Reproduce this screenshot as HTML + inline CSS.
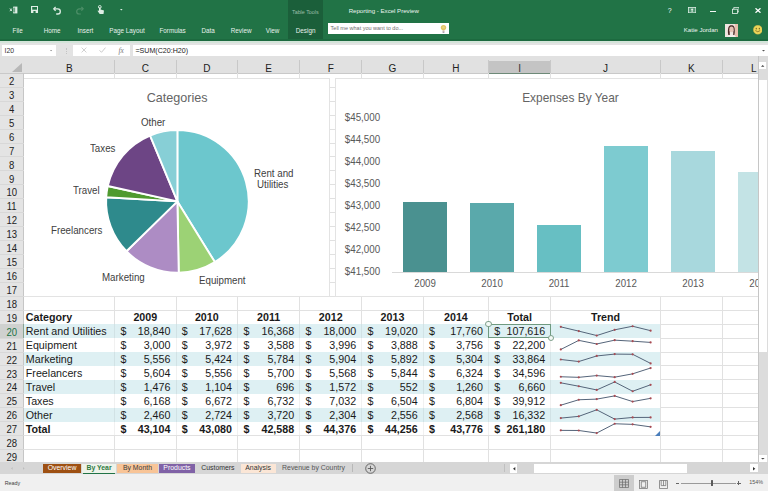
<!DOCTYPE html><html><head><meta charset="utf-8"><style>
*{margin:0;padding:0;box-sizing:border-box}
html,body{width:768px;height:491px;overflow:hidden;background:#fff;font-family:"Liberation Sans", sans-serif}
.a{position:absolute;white-space:nowrap}
.t{position:absolute;white-space:nowrap;line-height:1}
</style></head><body>
<div class="a" style="left:0;top:0;width:768px;height:40.7px;background:#217346"></div>
<div class="a" style="left:0;top:39.4px;width:768px;height:1.3px;background:#1c6a3f"></div>
<div class="a" style="left:288.3px;top:0;width:34.5px;height:39.4px;background:#1b5f3a"></div>
<div class="t" style="left:12.6px;top:28.3px;font-size:6.3px;color:#e8f1ec">File</div>
<div class="t" style="left:43.7px;top:28.3px;font-size:6.3px;color:#e8f1ec">Home</div>
<div class="t" style="left:77.5px;top:28.3px;font-size:6.3px;color:#e8f1ec">Insert</div>
<div class="t" style="left:109.3px;top:28.3px;font-size:6.3px;color:#e8f1ec">Page Layout</div>
<div class="t" style="left:159.5px;top:28.3px;font-size:6.3px;color:#e8f1ec">Formulas</div>
<div class="t" style="left:201.5px;top:28.3px;font-size:6.3px;color:#e8f1ec">Data</div>
<div class="t" style="left:230.8px;top:28.3px;font-size:6.3px;color:#e8f1ec">Review</div>
<div class="t" style="left:265.8px;top:28.3px;font-size:6.3px;color:#e8f1ec">View</div>
<div class="t" style="left:295.8px;top:28.3px;font-size:6.3px;color:#e8f1ec">Design</div>
<div class="t" style="left:292px;top:10.2px;font-size:5.35px;color:#9bbfab">Table Tools</div>
<div class="t" style="left:348.7px;top:8.2px;font-size:6.1px;color:#eef5f1">Reporting - Excel Preview</div>
<div class="a" style="left:328.2px;top:22.8px;width:121.3px;height:11.4px;background:#fff"></div>
<div class="t" style="left:330.6px;top:25.8px;font-size:5.5px;color:#6d6d6d">Tell me what you want to do...</div>
<svg class="a" style="left:439.5px;top:23.5px" width="7" height="10" viewBox="0 0 7 10"><circle cx="3.5" cy="3.6" r="2.7" fill="#e2c565"/><circle cx="3.5" cy="3.4" r="1.2" fill="#ecd488"/><rect x="2.5" y="6.3" width="2" height="1.2" fill="#d8b8a0"/><rect x="2.6" y="7.5" width="1.8" height="1.3" fill="#9a8aa0"/></svg>
<div class="t" style="left:683.8px;top:26.8px;font-size:6.1px;color:#eef5f1">Katie Jordan</div>
<svg class="a" style="left:725.3px;top:23.8px" width="13" height="13.2" viewBox="0 0 13 13.2"><rect width="13" height="13.2" fill="#efe6e0"/><rect x="9.8" y="0" width="3.2" height="13.2" fill="#e8c0ae"/><path d="M3.3 11 C2.6 8 2.8 4 3.8 2.5 C5 0.9 8.2 0.9 9.2 2.7 C10 4.4 10 8 9.4 11 L8.2 11 L8.4 6 L4.6 6 L4.8 11Z" fill="#4a2a26"/><ellipse cx="6.5" cy="5.4" rx="2.2" ry="2.8" fill="#e4c2b4"/><path d="M1.8 13.2 C3 10.2 10 10.2 11.2 13.2Z" fill="#f3efed"/></svg>
<svg class="a" style="left:752.9px;top:25.4px" width="9.6" height="9.6" viewBox="0 0 10 10"><circle cx="5" cy="5" r="4.7" fill="#ecd55a"/><circle cx="5" cy="5" r="4.7" fill="none" stroke="#c9b140" stroke-width="0.4"/><ellipse cx="3.4" cy="3.7" rx="0.6" ry="0.9" fill="#6b5a1a"/><ellipse cx="6.6" cy="3.7" rx="0.6" ry="0.9" fill="#6b5a1a"/><path d="M2.5 5.8 Q5 8.3 7.5 5.8" stroke="#6b5a1a" stroke-width="0.7" fill="none"/></svg>
<div class="t" style="left:667.8px;top:6.6px;font-size:7px;color:#fff">?</div>
<svg class="a" style="left:687.8px;top:6.7px" width="8.2" height="6.2" viewBox="0 0 8.2 6.2"><rect x="0.4" y="0.4" width="7.4" height="5.4" fill="#4f9570" stroke="#dfeee5" stroke-width="0.8"/><path d="M4.1 1.2 L2.7 2.8 H3.6 V4.9 H4.6 V2.8 H5.5Z" fill="#eef6f1"/></svg>
<div class="a" style="left:710px;top:10.9px;width:6px;height:0.8px;background:#f4f8f5"></div>
<svg class="a" style="left:732px;top:6.8px" width="7.4" height="7" viewBox="0 0 7.4 7"><rect x="0.4" y="2.2" width="5" height="4.4" fill="none" stroke="#eef6f1" stroke-width="0.8"/><path d="M1.8 2.2 V0.4 H7 V4.8 H5.4" fill="none" stroke="#eef6f1" stroke-width="0.8"/></svg>
<svg class="a" style="left:755px;top:8px" width="6" height="5" viewBox="0 0 6 5"><path d="M0.5 0.3 L5.5 4.7 M5.5 0.3 L0.5 4.7" stroke="#fff" stroke-width="1.3"/></svg>
<svg class="a" style="left:9px;top:6px" width="9" height="8" viewBox="0 0 9 8"><path d="M0.9 2.4 L3 5.2 M3 2.4 L0.9 5.2" stroke="#dfeee5" stroke-width="0.9"/><rect x="4.2" y="0.6" width="4.2" height="6.8" fill="#dfeee5"/><rect x="5.4" y="1.6" width="0.7" height="4.8" fill="#217346"/><rect x="3.6" y="2" width="0.8" height="4" fill="#217346"/></svg>
<svg class="a" style="left:31px;top:6.1px" width="7.2" height="7.2" viewBox="0 0 7.2 7.2"><rect x="0" y="0" width="7.2" height="7.2" fill="#dfeee5"/><rect x="1.2" y="1" width="4.8" height="2.7" fill="#217346"/><rect x="2.4" y="5" width="2.2" height="2.2" fill="#217346"/></svg>
<svg class="a" style="left:52.5px;top:6px" width="9" height="9" viewBox="0 0 9 9"><path d="M2.6 0.9 L0.8 2.8 L2.6 4.7" stroke="#dfeee5" stroke-width="1.3" fill="none"/><path d="M1.1 2.8 H4.7 A2.6 2.6 0 0 1 4.7 8 H3.2" stroke="#dfeee5" stroke-width="1.3" fill="none"/></svg>
<svg class="a" style="left:74.8px;top:6px" width="9" height="9" viewBox="0 0 9 9"><path d="M6.4 0.9 L8.2 2.8 L6.4 4.7" stroke="#4d8f68" stroke-width="1.2" fill="none"/><path d="M7.9 2.8 H4.3 A2.6 2.6 0 0 0 4.3 8 H5.8" stroke="#4d8f68" stroke-width="1.2" fill="none"/></svg>
<svg class="a" style="left:97px;top:5.2px" width="8" height="9.5" viewBox="0 0 8 9.5"><circle cx="2.8" cy="1.9" r="1.4" fill="none" stroke="#dfeee5" stroke-width="0.9"/><path d="M2 2.4 V6 L1 5.3 L0.6 6 L2.7 9 H6.5 L7 5.6 L3.6 4.6 V2.4Z" fill="#dfeee5"/></svg>
<svg class="a" style="left:118.60px;top:7.50px" width="4.60" height="3.50"><path d="M1.00 1.00 L3.60 1.00 L2.30 2.50Z" fill="#dfeee5"/></svg>
<div class="a" style="left:0;top:40.7px;width:768px;height:15.4px;background:#e3e3e3"></div>
<div class="a" style="left:0;top:40.7px;width:768px;height:2px;background:#d3e4d9"></div>
<div class="a" style="left:2px;top:44.8px;width:54px;height:11.1px;background:#fff"></div>
<div class="t" style="left:4.6px;top:48.1px;font-size:6.9px;color:#333">I20</div>
<svg class="a" style="left:49.30px;top:49.20px" width="4.20" height="3.20"><path d="M1.00 1.00 L3.20 1.00 L2.10 2.20Z" fill="#8a8a8a"/></svg>
<div class="a" style="left:66px;top:47.5px;width:0.8px;height:6px;border-left:0.8px dotted #c4c4c4"></div>
<div class="a" style="left:73px;top:44.8px;width:57.3px;height:11.1px;background:#fff"></div>
<svg class="a" style="left:80.5px;top:47.2px" width="6" height="6" viewBox="0 0 6 6"><path d="M0.6 0.6 L5.4 5.4 M5.4 0.6 L0.6 5.4" stroke="#c4c4c4" stroke-width="0.8"/></svg>
<svg class="a" style="left:99px;top:47.2px" width="7" height="6" viewBox="0 0 7 6"><path d="M0.5 3.3 L2.5 5.3 L6.5 0.6" stroke="#c4c4c4" stroke-width="0.9" fill="none"/></svg>
<div class="t" style="left:118.5px;top:47.1px;font-size:7.4px;color:#777;font-family:'Liberation Serif';font-style:italic">fx</div>
<div class="a" style="left:132.8px;top:44.8px;width:635.2px;height:11.1px;background:#fff"></div>
<div class="t" style="left:135.4px;top:47.9px;font-size:7.1px;color:#222">=SUM(C20:H20)</div>
<svg class="a" style="left:760.50px;top:49.30px" width="5.00" height="3.60"><path d="M1.00 1.00 L4.00 1.00 L2.50 2.60Z" fill="#555"/></svg>
<div class="a" style="left:0;top:56.0px;width:768px;height:17.200000000000003px;background:#e1e1e1"></div>
<div class="a" style="left:0;top:73.2px;width:768px;height:0.9px;background:#c9c9c9"></div>
<svg class="a" style="left:12px;top:63px" width="10" height="9" viewBox="0 0 10 9"><path d="M10 0 V9 H0Z" fill="#b8b8b8"/></svg>
<div class="a" style="left:114.19999999999999px;top:60.4px;width:0.8px;height:12.800000000000004px;background:#c8c8c8"></div>
<div class="t" style="left:24px;width:90.6px;text-align:center;top:63.9px;font-size:10px;color:#222">B</div>
<div class="a" style="left:175.6px;top:60.4px;width:0.8px;height:12.800000000000004px;background:#c8c8c8"></div>
<div class="t" style="left:114.6px;width:61.400000000000006px;text-align:center;top:63.9px;font-size:10px;color:#222">C</div>
<div class="a" style="left:237.2px;top:60.4px;width:0.8px;height:12.800000000000004px;background:#c8c8c8"></div>
<div class="t" style="left:176px;width:61.599999999999994px;text-align:center;top:63.9px;font-size:10px;color:#222">D</div>
<div class="a" style="left:299.40000000000003px;top:60.4px;width:0.8px;height:12.800000000000004px;background:#c8c8c8"></div>
<div class="t" style="left:237.6px;width:62.20000000000002px;text-align:center;top:63.9px;font-size:10px;color:#222">E</div>
<div class="a" style="left:361.3px;top:60.4px;width:0.8px;height:12.800000000000004px;background:#c8c8c8"></div>
<div class="t" style="left:299.8px;width:61.89999999999998px;text-align:center;top:63.9px;font-size:10px;color:#222">F</div>
<div class="a" style="left:422.90000000000003px;top:60.4px;width:0.8px;height:12.800000000000004px;background:#c8c8c8"></div>
<div class="t" style="left:361.7px;width:61.60000000000002px;text-align:center;top:63.9px;font-size:10px;color:#222">G</div>
<div class="a" style="left:488.1px;top:60.4px;width:0.8px;height:12.800000000000004px;background:#c8c8c8"></div>
<div class="t" style="left:423.3px;width:65.19999999999999px;text-align:center;top:63.9px;font-size:10px;color:#222">H</div>
<div class="a" style="left:488.5px;top:60.8px;width:62.299999999999955px;height:12.400000000000006px;background:#c4c4c4"></div>
<div class="a" style="left:488.5px;top:72.7px;width:62.299999999999955px;height:1.4px;background:#6e8a78"></div>
<div class="a" style="left:550.4px;top:60.4px;width:0.8px;height:12.800000000000004px;background:#c8c8c8"></div>
<div class="t" style="left:488.5px;width:62.299999999999955px;text-align:center;top:63.9px;font-size:10px;color:#333">I</div>
<div class="a" style="left:659.8000000000001px;top:60.4px;width:0.8px;height:12.800000000000004px;background:#c8c8c8"></div>
<div class="t" style="left:550.8px;width:109.40000000000009px;text-align:center;top:63.9px;font-size:10px;color:#222">J</div>
<div class="a" style="left:722.2px;top:60.4px;width:0.8px;height:12.800000000000004px;background:#c8c8c8"></div>
<div class="t" style="left:660.2px;width:62.39999999999998px;text-align:center;top:63.9px;font-size:10px;color:#222">K</div>
<div class="a" style="left:784.6px;top:60.4px;width:0.8px;height:12.800000000000004px;background:#c8c8c8"></div>
<div class="t" style="left:722.6px;width:62.39999999999998px;text-align:center;top:63.9px;font-size:10px;color:#222">L</div>
<div class="a" style="left:0;top:74.10000000000001px;width:23.6px;height:388.90000000000003px;background:#e4e4e4"></div>
<div class="a" style="left:23.4px;top:73.2px;width:0.8px;height:388.90000000000003px;background:#c6c6c6"></div>
<div class="a" style="left:24.2px;top:324.04px;width:636.0px;height:13.93px;background:#def0f3"></div>
<div class="a" style="left:24.2px;top:351.90000000000003px;width:636.0px;height:13.93px;background:#def0f3"></div>
<div class="a" style="left:24.2px;top:379.76px;width:636.0px;height:13.93px;background:#def0f3"></div>
<div class="a" style="left:24.2px;top:407.62px;width:636.0px;height:13.93px;background:#def0f3"></div>
<div class="a" style="left:24px;top:86.82999999999998px;width:734px;height:0.8px;background:#e1e1e1"></div>
<div class="a" style="left:0px;top:86.82999999999998px;width:23.5px;height:0.8px;background:#d8d8d8"></div>
<div class="a" style="left:24px;top:100.75999999999999px;width:734px;height:0.8px;background:#e1e1e1"></div>
<div class="a" style="left:0px;top:100.75999999999999px;width:23.5px;height:0.8px;background:#d8d8d8"></div>
<div class="a" style="left:24px;top:114.69px;width:734px;height:0.8px;background:#e1e1e1"></div>
<div class="a" style="left:0px;top:114.69px;width:23.5px;height:0.8px;background:#d8d8d8"></div>
<div class="a" style="left:24px;top:128.61999999999998px;width:734px;height:0.8px;background:#e1e1e1"></div>
<div class="a" style="left:0px;top:128.61999999999998px;width:23.5px;height:0.8px;background:#d8d8d8"></div>
<div class="a" style="left:24px;top:142.54999999999998px;width:734px;height:0.8px;background:#e1e1e1"></div>
<div class="a" style="left:0px;top:142.54999999999998px;width:23.5px;height:0.8px;background:#d8d8d8"></div>
<div class="a" style="left:24px;top:156.48px;width:734px;height:0.8px;background:#e1e1e1"></div>
<div class="a" style="left:0px;top:156.48px;width:23.5px;height:0.8px;background:#d8d8d8"></div>
<div class="a" style="left:24px;top:170.41px;width:734px;height:0.8px;background:#e1e1e1"></div>
<div class="a" style="left:0px;top:170.41px;width:23.5px;height:0.8px;background:#d8d8d8"></div>
<div class="a" style="left:24px;top:184.34px;width:734px;height:0.8px;background:#e1e1e1"></div>
<div class="a" style="left:0px;top:184.34px;width:23.5px;height:0.8px;background:#d8d8d8"></div>
<div class="a" style="left:24px;top:198.27px;width:734px;height:0.8px;background:#e1e1e1"></div>
<div class="a" style="left:0px;top:198.27px;width:23.5px;height:0.8px;background:#d8d8d8"></div>
<div class="a" style="left:24px;top:212.20000000000002px;width:734px;height:0.8px;background:#e1e1e1"></div>
<div class="a" style="left:0px;top:212.20000000000002px;width:23.5px;height:0.8px;background:#d8d8d8"></div>
<div class="a" style="left:24px;top:226.12999999999997px;width:734px;height:0.8px;background:#e1e1e1"></div>
<div class="a" style="left:0px;top:226.12999999999997px;width:23.5px;height:0.8px;background:#d8d8d8"></div>
<div class="a" style="left:24px;top:240.05999999999997px;width:734px;height:0.8px;background:#e1e1e1"></div>
<div class="a" style="left:0px;top:240.05999999999997px;width:23.5px;height:0.8px;background:#d8d8d8"></div>
<div class="a" style="left:24px;top:253.98999999999998px;width:734px;height:0.8px;background:#e1e1e1"></div>
<div class="a" style="left:0px;top:253.98999999999998px;width:23.5px;height:0.8px;background:#d8d8d8"></div>
<div class="a" style="left:24px;top:267.92px;width:734px;height:0.8px;background:#e1e1e1"></div>
<div class="a" style="left:0px;top:267.92px;width:23.5px;height:0.8px;background:#d8d8d8"></div>
<div class="a" style="left:24px;top:281.85px;width:734px;height:0.8px;background:#e1e1e1"></div>
<div class="a" style="left:0px;top:281.85px;width:23.5px;height:0.8px;background:#d8d8d8"></div>
<div class="a" style="left:24px;top:295.78000000000003px;width:734px;height:0.8px;background:#e1e1e1"></div>
<div class="a" style="left:0px;top:295.78000000000003px;width:23.5px;height:0.8px;background:#d8d8d8"></div>
<div class="a" style="left:24px;top:309.71000000000004px;width:734px;height:0.8px;background:#e1e1e1"></div>
<div class="a" style="left:0px;top:309.71000000000004px;width:23.5px;height:0.8px;background:#d8d8d8"></div>
<div class="a" style="left:660.2px;top:323.64000000000004px;width:98px;height:0.8px;background:#e1e1e1"></div>
<div class="a" style="left:0px;top:323.64000000000004px;width:23.5px;height:0.8px;background:#d8d8d8"></div>
<div class="a" style="left:660.2px;top:337.57000000000005px;width:98px;height:0.8px;background:#e1e1e1"></div>
<div class="a" style="left:0px;top:337.57000000000005px;width:23.5px;height:0.8px;background:#d8d8d8"></div>
<div class="a" style="left:660.2px;top:351.50000000000006px;width:98px;height:0.8px;background:#e1e1e1"></div>
<div class="a" style="left:0px;top:351.50000000000006px;width:23.5px;height:0.8px;background:#d8d8d8"></div>
<div class="a" style="left:660.2px;top:365.43px;width:98px;height:0.8px;background:#e1e1e1"></div>
<div class="a" style="left:0px;top:365.43px;width:23.5px;height:0.8px;background:#d8d8d8"></div>
<div class="a" style="left:660.2px;top:379.36px;width:98px;height:0.8px;background:#e1e1e1"></div>
<div class="a" style="left:0px;top:379.36px;width:23.5px;height:0.8px;background:#d8d8d8"></div>
<div class="a" style="left:660.2px;top:393.29px;width:98px;height:0.8px;background:#e1e1e1"></div>
<div class="a" style="left:0px;top:393.29px;width:23.5px;height:0.8px;background:#d8d8d8"></div>
<div class="a" style="left:660.2px;top:407.22px;width:98px;height:0.8px;background:#e1e1e1"></div>
<div class="a" style="left:0px;top:407.22px;width:23.5px;height:0.8px;background:#d8d8d8"></div>
<div class="a" style="left:660.2px;top:421.15000000000003px;width:98px;height:0.8px;background:#e1e1e1"></div>
<div class="a" style="left:0px;top:421.15000000000003px;width:23.5px;height:0.8px;background:#d8d8d8"></div>
<div class="a" style="left:24px;top:435.08000000000004px;width:734px;height:0.8px;background:#e1e1e1"></div>
<div class="a" style="left:0px;top:435.08000000000004px;width:23.5px;height:0.8px;background:#d8d8d8"></div>
<div class="a" style="left:24px;top:449.01000000000005px;width:734px;height:0.8px;background:#e1e1e1"></div>
<div class="a" style="left:0px;top:449.01000000000005px;width:23.5px;height:0.8px;background:#d8d8d8"></div>
<div class="a" style="left:114.19999999999999px;top:73.2px;width:0.8px;height:250.84000000000003px;background:#e1e1e1"></div>
<div class="a" style="left:114.19999999999999px;top:435.48px;width:0.8px;height:26.620000000000005px;background:#e1e1e1"></div>
<div class="a" style="left:114.19999999999999px;top:324.04px;width:0.8px;height:111.44px;background:rgba(0,0,0,0.055)"></div>
<div class="a" style="left:175.6px;top:73.2px;width:0.8px;height:250.84000000000003px;background:#e1e1e1"></div>
<div class="a" style="left:175.6px;top:435.48px;width:0.8px;height:26.620000000000005px;background:#e1e1e1"></div>
<div class="a" style="left:175.6px;top:324.04px;width:0.8px;height:111.44px;background:rgba(0,0,0,0.055)"></div>
<div class="a" style="left:237.2px;top:73.2px;width:0.8px;height:250.84000000000003px;background:#e1e1e1"></div>
<div class="a" style="left:237.2px;top:435.48px;width:0.8px;height:26.620000000000005px;background:#e1e1e1"></div>
<div class="a" style="left:237.2px;top:324.04px;width:0.8px;height:111.44px;background:rgba(0,0,0,0.055)"></div>
<div class="a" style="left:299.40000000000003px;top:73.2px;width:0.8px;height:250.84000000000003px;background:#e1e1e1"></div>
<div class="a" style="left:299.40000000000003px;top:435.48px;width:0.8px;height:26.620000000000005px;background:#e1e1e1"></div>
<div class="a" style="left:299.40000000000003px;top:324.04px;width:0.8px;height:111.44px;background:rgba(0,0,0,0.055)"></div>
<div class="a" style="left:361.3px;top:73.2px;width:0.8px;height:250.84000000000003px;background:#e1e1e1"></div>
<div class="a" style="left:361.3px;top:435.48px;width:0.8px;height:26.620000000000005px;background:#e1e1e1"></div>
<div class="a" style="left:361.3px;top:324.04px;width:0.8px;height:111.44px;background:rgba(0,0,0,0.055)"></div>
<div class="a" style="left:422.90000000000003px;top:73.2px;width:0.8px;height:250.84000000000003px;background:#e1e1e1"></div>
<div class="a" style="left:422.90000000000003px;top:435.48px;width:0.8px;height:26.620000000000005px;background:#e1e1e1"></div>
<div class="a" style="left:422.90000000000003px;top:324.04px;width:0.8px;height:111.44px;background:rgba(0,0,0,0.055)"></div>
<div class="a" style="left:488.1px;top:73.2px;width:0.8px;height:250.84000000000003px;background:#e1e1e1"></div>
<div class="a" style="left:488.1px;top:435.48px;width:0.8px;height:26.620000000000005px;background:#e1e1e1"></div>
<div class="a" style="left:488.1px;top:324.04px;width:0.8px;height:111.44px;background:rgba(0,0,0,0.055)"></div>
<div class="a" style="left:550.4px;top:73.2px;width:0.8px;height:250.84000000000003px;background:#e1e1e1"></div>
<div class="a" style="left:550.4px;top:435.48px;width:0.8px;height:26.620000000000005px;background:#e1e1e1"></div>
<div class="a" style="left:550.4px;top:324.04px;width:0.8px;height:111.44px;background:rgba(0,0,0,0.055)"></div>
<div class="a" style="left:659.8000000000001px;top:73.2px;width:0.8px;height:388.90000000000003px;background:#e1e1e1"></div>
<div class="a" style="left:722.2px;top:73.2px;width:0.8px;height:388.90000000000003px;background:#e1e1e1"></div>
<div class="t" style="left:0;width:23.4px;text-align:center;top:76.0px;font-size:10.6px;transform:scaleX(0.9);color:#222">2</div>
<div class="t" style="left:0;width:23.4px;text-align:center;top:89.92999999999999px;font-size:10.6px;transform:scaleX(0.9);color:#222">3</div>
<div class="t" style="left:0;width:23.4px;text-align:center;top:103.86px;font-size:10.6px;transform:scaleX(0.9);color:#222">4</div>
<div class="t" style="left:0;width:23.4px;text-align:center;top:117.79px;font-size:10.6px;transform:scaleX(0.9);color:#222">5</div>
<div class="t" style="left:0;width:23.4px;text-align:center;top:131.71999999999997px;font-size:10.6px;transform:scaleX(0.9);color:#222">6</div>
<div class="t" style="left:0;width:23.4px;text-align:center;top:145.64999999999998px;font-size:10.6px;transform:scaleX(0.9);color:#222">7</div>
<div class="t" style="left:0;width:23.4px;text-align:center;top:159.57999999999998px;font-size:10.6px;transform:scaleX(0.9);color:#222">8</div>
<div class="t" style="left:0;width:23.4px;text-align:center;top:173.51px;font-size:10.6px;transform:scaleX(0.9);color:#222">9</div>
<div class="t" style="left:0;width:23.4px;text-align:center;top:187.44px;font-size:10.6px;transform:scaleX(0.9);color:#222">10</div>
<div class="t" style="left:0;width:23.4px;text-align:center;top:201.37px;font-size:10.6px;transform:scaleX(0.9);color:#222">11</div>
<div class="t" style="left:0;width:23.4px;text-align:center;top:215.3px;font-size:10.6px;transform:scaleX(0.9);color:#222">12</div>
<div class="t" style="left:0;width:23.4px;text-align:center;top:229.22999999999996px;font-size:10.6px;transform:scaleX(0.9);color:#222">13</div>
<div class="t" style="left:0;width:23.4px;text-align:center;top:243.15999999999997px;font-size:10.6px;transform:scaleX(0.9);color:#222">14</div>
<div class="t" style="left:0;width:23.4px;text-align:center;top:257.09px;font-size:10.6px;transform:scaleX(0.9);color:#222">15</div>
<div class="t" style="left:0;width:23.4px;text-align:center;top:271.02px;font-size:10.6px;transform:scaleX(0.9);color:#222">16</div>
<div class="t" style="left:0;width:23.4px;text-align:center;top:284.95px;font-size:10.6px;transform:scaleX(0.9);color:#222">17</div>
<div class="t" style="left:0;width:23.4px;text-align:center;top:298.88px;font-size:10.6px;transform:scaleX(0.9);color:#222">18</div>
<div class="t" style="left:0;width:23.4px;text-align:center;top:312.81px;font-size:10.6px;transform:scaleX(0.9);color:#222">19</div>
<div class="a" style="left:0;top:324.04px;width:23.4px;height:13.93px;background:#cfd1cf"></div>
<div class="a" style="left:22.8px;top:324.04px;width:1px;height:13.93px;background:#88a393"></div>
<div class="t" style="left:0;width:23.4px;text-align:center;top:326.74px;font-size:10.6px;transform:scaleX(0.9);color:#217346">20</div>
<div class="t" style="left:0;width:23.4px;text-align:center;top:340.67px;font-size:10.6px;transform:scaleX(0.9);color:#222">21</div>
<div class="t" style="left:0;width:23.4px;text-align:center;top:354.6px;font-size:10.6px;transform:scaleX(0.9);color:#222">22</div>
<div class="t" style="left:0;width:23.4px;text-align:center;top:368.53px;font-size:10.6px;transform:scaleX(0.9);color:#222">23</div>
<div class="t" style="left:0;width:23.4px;text-align:center;top:382.46px;font-size:10.6px;transform:scaleX(0.9);color:#222">24</div>
<div class="t" style="left:0;width:23.4px;text-align:center;top:396.39px;font-size:10.6px;transform:scaleX(0.9);color:#222">25</div>
<div class="t" style="left:0;width:23.4px;text-align:center;top:410.32px;font-size:10.6px;transform:scaleX(0.9);color:#222">26</div>
<div class="t" style="left:0;width:23.4px;text-align:center;top:424.25px;font-size:10.6px;transform:scaleX(0.9);color:#222">27</div>
<div class="t" style="left:0;width:23.4px;text-align:center;top:438.18px;font-size:10.6px;transform:scaleX(0.9);color:#222">28</div>
<div class="t" style="left:0;width:23.4px;text-align:center;top:452.11px;font-size:10.6px;transform:scaleX(0.9);color:#222">29</div>
<div class="a" style="left:24.2px;top:78.0px;width:305.40000000000003px;height:218.89999999999998px;background:#fff;border:0.8px solid #e3e3e3;border-left:none"></div>
<div class="a" style="left:335.4px;top:78.0px;width:422.6px;height:218.89999999999998px;background:#fff;border:0.8px solid #e3e3e3;border-right:none"></div>
<div class="t" style="left:146.7px;top:91.8px;font-size:12.6px;color:#646464">Categories</div>
<div class="t" style="left:522.2px;top:92.7px;font-size:11.9px;color:#646464">Expenses By Year</div>
<svg class="a" style="left:0;top:0" width="768" height="491" viewBox="0 0 768 491">
<path d="M177.4 201.4 L177.40 130.10 A71.3 71.3 0 0 1 214.83 262.08Z" fill="#6cc7cd" stroke="#fff" stroke-width="1.9" stroke-linejoin="round"/>
<path d="M177.4 201.4 L214.83 262.08 A71.3 71.3 0 0 1 178.73 272.69Z" fill="#9cd275" stroke="#fff" stroke-width="1.9" stroke-linejoin="round"/>
<path d="M177.4 201.4 L178.73 272.69 A71.3 71.3 0 0 1 126.45 251.28Z" fill="#ad8cc4" stroke="#fff" stroke-width="1.9" stroke-linejoin="round"/>
<path d="M177.4 201.4 L126.45 251.28 A71.3 71.3 0 0 1 106.22 197.30Z" fill="#2e8a8c" stroke="#fff" stroke-width="1.9" stroke-linejoin="round"/>
<path d="M177.4 201.4 L106.22 197.30 A71.3 71.3 0 0 1 107.78 186.00Z" fill="#4f9a2f" stroke="#fff" stroke-width="1.9" stroke-linejoin="round"/>
<path d="M177.4 201.4 L107.78 186.00 A71.3 71.3 0 0 1 150.10 135.53Z" fill="#6d4585" stroke="#fff" stroke-width="1.9" stroke-linejoin="round"/>
<path d="M177.4 201.4 L150.10 135.53 A71.3 71.3 0 0 1 177.40 130.10Z" fill="#87cfd6" stroke="#fff" stroke-width="1.9" stroke-linejoin="round"/>
</svg>
<div class="t" style="left:141px;top:116.8px;font-size:11.4px;transform:scaleX(0.855);transform-origin:0 0;color:#404040">Other</div>
<div class="t" style="left:89.8px;top:142.8px;font-size:11.4px;transform:scaleX(0.855);transform-origin:0 0;color:#404040">Taxes</div>
<div class="t" style="left:72.5px;top:185.4px;font-size:11.4px;transform:scaleX(0.855);transform-origin:0 0;color:#404040">Travel</div>
<div class="t" style="left:51.2px;top:225.3px;font-size:11.4px;transform:scaleX(0.855);transform-origin:0 0;color:#404040">Freelancers</div>
<div class="t" style="left:101.8px;top:272.3px;font-size:11.4px;transform:scaleX(0.855);transform-origin:0 0;color:#404040">Marketing</div>
<div class="t" style="left:199.4px;top:275.0px;font-size:11.4px;transform:scaleX(0.855);transform-origin:0 0;color:#404040">Equipment</div>
<div class="t" style="left:253.5px;top:167.60000000000002px;font-size:11.4px;transform:scaleX(0.855);transform-origin:0 0;color:#404040">Rent and</div>
<div class="t" style="left:257.3px;top:178.5px;font-size:11.4px;transform:scaleX(0.855);transform-origin:0 0;color:#404040">Utilities</div>
<div class="a" style="left:392px;top:272.4px;width:366px;height:0.8px;background:#d9d9d9"></div>
<div class="t" style="left:330px;width:50.2px;text-align:right;top:111.7px;font-size:11.3px;transform:scaleX(0.867);transform-origin:100% 0;color:#595959">$45,000</div>
<div class="t" style="left:330px;width:50.2px;text-align:right;top:133.70000000000002px;font-size:11.3px;transform:scaleX(0.867);transform-origin:100% 0;color:#595959">$44,500</div>
<div class="t" style="left:330px;width:50.2px;text-align:right;top:155.70000000000002px;font-size:11.3px;transform:scaleX(0.867);transform-origin:100% 0;color:#595959">$44,000</div>
<div class="t" style="left:330px;width:50.2px;text-align:right;top:177.70000000000002px;font-size:11.3px;transform:scaleX(0.867);transform-origin:100% 0;color:#595959">$43,500</div>
<div class="t" style="left:330px;width:50.2px;text-align:right;top:199.70000000000002px;font-size:11.3px;transform:scaleX(0.867);transform-origin:100% 0;color:#595959">$43,000</div>
<div class="t" style="left:330px;width:50.2px;text-align:right;top:221.70000000000002px;font-size:11.3px;transform:scaleX(0.867);transform-origin:100% 0;color:#595959">$42,500</div>
<div class="t" style="left:330px;width:50.2px;text-align:right;top:243.70000000000002px;font-size:11.3px;transform:scaleX(0.867);transform-origin:100% 0;color:#595959">$42,000</div>
<div class="t" style="left:330px;width:50.2px;text-align:right;top:265.7px;font-size:11.3px;transform:scaleX(0.867);transform-origin:100% 0;color:#595959">$41,500</div>
<div class="a" style="left:403.30px;top:201.82px;width:44.20px;height:70.58px;background:#4a9190"></div>
<div class="t" style="left:393.30px;width:64.2px;text-align:center;top:278.3px;font-size:11.2px;transform:scaleX(0.866);color:#595959">2009</div>
<div class="a" style="left:470.15px;top:202.88px;width:44.20px;height:69.52px;background:#5aa9ab"></div>
<div class="t" style="left:460.15px;width:64.2px;text-align:center;top:278.3px;font-size:11.2px;transform:scaleX(0.866);color:#595959">2010</div>
<div class="a" style="left:537.00px;top:224.53px;width:44.20px;height:47.87px;background:#67bfc3"></div>
<div class="t" style="left:527.00px;width:64.2px;text-align:center;top:278.3px;font-size:11.2px;transform:scaleX(0.866);color:#595959">2011</div>
<div class="a" style="left:603.85px;top:145.86px;width:44.20px;height:126.54px;background:#7dcbd0"></div>
<div class="t" style="left:593.85px;width:64.2px;text-align:center;top:278.3px;font-size:11.2px;transform:scaleX(0.866);color:#595959">2012</div>
<div class="a" style="left:670.70px;top:151.14px;width:44.20px;height:121.26px;background:#a8d8dd"></div>
<div class="t" style="left:660.70px;width:64.2px;text-align:center;top:278.3px;font-size:11.2px;transform:scaleX(0.866);color:#595959">2013</div>
<div class="a" style="left:737.55px;top:172.26px;width:20.05px;height:100.14px;background:#c3e3e5"></div>
<div class="t" style="left:727.55px;width:64.2px;text-align:center;top:278.3px;font-size:11.2px;transform:scaleX(0.866);color:#595959">2014</div>
<div class="t" style="top:312.31px;font-size:10.7px;color:#1a1a1a;font-weight:bold;left:25.8px;">Category</div>
<div class="t" style="top:312.31px;font-size:10.7px;color:#1a1a1a;font-weight:bold;left:114.6px;width:61.400000000000006px;text-align:center;">2009</div>
<div class="t" style="top:312.31px;font-size:10.7px;color:#1a1a1a;font-weight:bold;left:176px;width:61.599999999999994px;text-align:center;">2010</div>
<div class="t" style="top:312.31px;font-size:10.7px;color:#1a1a1a;font-weight:bold;left:237.6px;width:62.20000000000002px;text-align:center;">2011</div>
<div class="t" style="top:312.31px;font-size:10.7px;color:#1a1a1a;font-weight:bold;left:299.8px;width:61.89999999999998px;text-align:center;">2012</div>
<div class="t" style="top:312.31px;font-size:10.7px;color:#1a1a1a;font-weight:bold;left:361.7px;width:61.60000000000002px;text-align:center;">2013</div>
<div class="t" style="top:312.31px;font-size:10.7px;color:#1a1a1a;font-weight:bold;left:423.3px;width:65.19999999999999px;text-align:center;">2014</div>
<div class="t" style="top:312.31px;font-size:10.7px;color:#1a1a1a;font-weight:bold;left:488.5px;width:62.299999999999955px;text-align:center;">Total</div>
<div class="t" style="top:312.31px;font-size:10.7px;color:#1a1a1a;font-weight:bold;left:550.8px;width:109.40000000000009px;text-align:center;">Trend</div>
<div class="t" style="top:326.24px;font-size:10.7px;color:#1a1a1a;left:25.8px;">Rent and Utilities</div>
<div class="t" style="top:326.24px;font-size:10.7px;color:#1a1a1a;left:120.39999999999999px;">$</div>
<div class="t" style="top:326.24px;font-size:10.7px;color:#1a1a1a;left:110.4px;width:60px;text-align:right;">18,840</div>
<div class="t" style="top:326.24px;font-size:10.7px;color:#1a1a1a;left:181.8px;">$</div>
<div class="t" style="top:326.24px;font-size:10.7px;color:#1a1a1a;left:172.0px;width:60px;text-align:right;">17,628</div>
<div class="t" style="top:326.24px;font-size:10.7px;color:#1a1a1a;left:243.4px;">$</div>
<div class="t" style="top:326.24px;font-size:10.7px;color:#1a1a1a;left:234.2px;width:60px;text-align:right;">16,368</div>
<div class="t" style="top:326.24px;font-size:10.7px;color:#1a1a1a;left:305.6px;">$</div>
<div class="t" style="top:326.24px;font-size:10.7px;color:#1a1a1a;left:296.09999999999997px;width:60px;text-align:right;">18,000</div>
<div class="t" style="top:326.24px;font-size:10.7px;color:#1a1a1a;left:367.5px;">$</div>
<div class="t" style="top:326.24px;font-size:10.7px;color:#1a1a1a;left:357.7px;width:60px;text-align:right;">19,020</div>
<div class="t" style="top:326.24px;font-size:10.7px;color:#1a1a1a;left:429.1px;">$</div>
<div class="t" style="top:326.24px;font-size:10.7px;color:#1a1a1a;left:422.9px;width:60px;text-align:right;">17,760</div>
<div class="t" style="top:326.24px;font-size:10.7px;color:#1a1a1a;left:494.3px;">$</div>
<div class="t" style="top:326.24px;font-size:10.7px;color:#1a1a1a;left:485.19999999999993px;width:60px;text-align:right;">107,616</div>
<div class="t" style="top:340.17px;font-size:10.7px;color:#1a1a1a;left:25.8px;">Equipment</div>
<div class="t" style="top:340.17px;font-size:10.7px;color:#1a1a1a;left:120.39999999999999px;">$</div>
<div class="t" style="top:340.17px;font-size:10.7px;color:#1a1a1a;left:110.4px;width:60px;text-align:right;">3,000</div>
<div class="t" style="top:340.17px;font-size:10.7px;color:#1a1a1a;left:181.8px;">$</div>
<div class="t" style="top:340.17px;font-size:10.7px;color:#1a1a1a;left:172.0px;width:60px;text-align:right;">3,972</div>
<div class="t" style="top:340.17px;font-size:10.7px;color:#1a1a1a;left:243.4px;">$</div>
<div class="t" style="top:340.17px;font-size:10.7px;color:#1a1a1a;left:234.2px;width:60px;text-align:right;">3,588</div>
<div class="t" style="top:340.17px;font-size:10.7px;color:#1a1a1a;left:305.6px;">$</div>
<div class="t" style="top:340.17px;font-size:10.7px;color:#1a1a1a;left:296.09999999999997px;width:60px;text-align:right;">3,996</div>
<div class="t" style="top:340.17px;font-size:10.7px;color:#1a1a1a;left:367.5px;">$</div>
<div class="t" style="top:340.17px;font-size:10.7px;color:#1a1a1a;left:357.7px;width:60px;text-align:right;">3,888</div>
<div class="t" style="top:340.17px;font-size:10.7px;color:#1a1a1a;left:429.1px;">$</div>
<div class="t" style="top:340.17px;font-size:10.7px;color:#1a1a1a;left:422.9px;width:60px;text-align:right;">3,756</div>
<div class="t" style="top:340.17px;font-size:10.7px;color:#1a1a1a;left:494.3px;">$</div>
<div class="t" style="top:340.17px;font-size:10.7px;color:#1a1a1a;left:485.19999999999993px;width:60px;text-align:right;">22,200</div>
<div class="t" style="top:354.1px;font-size:10.7px;color:#1a1a1a;left:25.8px;">Marketing</div>
<div class="t" style="top:354.1px;font-size:10.7px;color:#1a1a1a;left:120.39999999999999px;">$</div>
<div class="t" style="top:354.1px;font-size:10.7px;color:#1a1a1a;left:110.4px;width:60px;text-align:right;">5,556</div>
<div class="t" style="top:354.1px;font-size:10.7px;color:#1a1a1a;left:181.8px;">$</div>
<div class="t" style="top:354.1px;font-size:10.7px;color:#1a1a1a;left:172.0px;width:60px;text-align:right;">5,424</div>
<div class="t" style="top:354.1px;font-size:10.7px;color:#1a1a1a;left:243.4px;">$</div>
<div class="t" style="top:354.1px;font-size:10.7px;color:#1a1a1a;left:234.2px;width:60px;text-align:right;">5,784</div>
<div class="t" style="top:354.1px;font-size:10.7px;color:#1a1a1a;left:305.6px;">$</div>
<div class="t" style="top:354.1px;font-size:10.7px;color:#1a1a1a;left:296.09999999999997px;width:60px;text-align:right;">5,904</div>
<div class="t" style="top:354.1px;font-size:10.7px;color:#1a1a1a;left:367.5px;">$</div>
<div class="t" style="top:354.1px;font-size:10.7px;color:#1a1a1a;left:357.7px;width:60px;text-align:right;">5,892</div>
<div class="t" style="top:354.1px;font-size:10.7px;color:#1a1a1a;left:429.1px;">$</div>
<div class="t" style="top:354.1px;font-size:10.7px;color:#1a1a1a;left:422.9px;width:60px;text-align:right;">5,304</div>
<div class="t" style="top:354.1px;font-size:10.7px;color:#1a1a1a;left:494.3px;">$</div>
<div class="t" style="top:354.1px;font-size:10.7px;color:#1a1a1a;left:485.19999999999993px;width:60px;text-align:right;">33,864</div>
<div class="t" style="top:368.03px;font-size:10.7px;color:#1a1a1a;left:25.8px;">Freelancers</div>
<div class="t" style="top:368.03px;font-size:10.7px;color:#1a1a1a;left:120.39999999999999px;">$</div>
<div class="t" style="top:368.03px;font-size:10.7px;color:#1a1a1a;left:110.4px;width:60px;text-align:right;">5,604</div>
<div class="t" style="top:368.03px;font-size:10.7px;color:#1a1a1a;left:181.8px;">$</div>
<div class="t" style="top:368.03px;font-size:10.7px;color:#1a1a1a;left:172.0px;width:60px;text-align:right;">5,556</div>
<div class="t" style="top:368.03px;font-size:10.7px;color:#1a1a1a;left:243.4px;">$</div>
<div class="t" style="top:368.03px;font-size:10.7px;color:#1a1a1a;left:234.2px;width:60px;text-align:right;">5,700</div>
<div class="t" style="top:368.03px;font-size:10.7px;color:#1a1a1a;left:305.6px;">$</div>
<div class="t" style="top:368.03px;font-size:10.7px;color:#1a1a1a;left:296.09999999999997px;width:60px;text-align:right;">5,568</div>
<div class="t" style="top:368.03px;font-size:10.7px;color:#1a1a1a;left:367.5px;">$</div>
<div class="t" style="top:368.03px;font-size:10.7px;color:#1a1a1a;left:357.7px;width:60px;text-align:right;">5,844</div>
<div class="t" style="top:368.03px;font-size:10.7px;color:#1a1a1a;left:429.1px;">$</div>
<div class="t" style="top:368.03px;font-size:10.7px;color:#1a1a1a;left:422.9px;width:60px;text-align:right;">6,324</div>
<div class="t" style="top:368.03px;font-size:10.7px;color:#1a1a1a;left:494.3px;">$</div>
<div class="t" style="top:368.03px;font-size:10.7px;color:#1a1a1a;left:485.19999999999993px;width:60px;text-align:right;">34,596</div>
<div class="t" style="top:381.96px;font-size:10.7px;color:#1a1a1a;left:25.8px;">Travel</div>
<div class="t" style="top:381.96px;font-size:10.7px;color:#1a1a1a;left:120.39999999999999px;">$</div>
<div class="t" style="top:381.96px;font-size:10.7px;color:#1a1a1a;left:110.4px;width:60px;text-align:right;">1,476</div>
<div class="t" style="top:381.96px;font-size:10.7px;color:#1a1a1a;left:181.8px;">$</div>
<div class="t" style="top:381.96px;font-size:10.7px;color:#1a1a1a;left:172.0px;width:60px;text-align:right;">1,104</div>
<div class="t" style="top:381.96px;font-size:10.7px;color:#1a1a1a;left:243.4px;">$</div>
<div class="t" style="top:381.96px;font-size:10.7px;color:#1a1a1a;left:234.2px;width:60px;text-align:right;">696</div>
<div class="t" style="top:381.96px;font-size:10.7px;color:#1a1a1a;left:305.6px;">$</div>
<div class="t" style="top:381.96px;font-size:10.7px;color:#1a1a1a;left:296.09999999999997px;width:60px;text-align:right;">1,572</div>
<div class="t" style="top:381.96px;font-size:10.7px;color:#1a1a1a;left:367.5px;">$</div>
<div class="t" style="top:381.96px;font-size:10.7px;color:#1a1a1a;left:357.7px;width:60px;text-align:right;">552</div>
<div class="t" style="top:381.96px;font-size:10.7px;color:#1a1a1a;left:429.1px;">$</div>
<div class="t" style="top:381.96px;font-size:10.7px;color:#1a1a1a;left:422.9px;width:60px;text-align:right;">1,260</div>
<div class="t" style="top:381.96px;font-size:10.7px;color:#1a1a1a;left:494.3px;">$</div>
<div class="t" style="top:381.96px;font-size:10.7px;color:#1a1a1a;left:485.19999999999993px;width:60px;text-align:right;">6,660</div>
<div class="t" style="top:395.89px;font-size:10.7px;color:#1a1a1a;left:25.8px;">Taxes</div>
<div class="t" style="top:395.89px;font-size:10.7px;color:#1a1a1a;left:120.39999999999999px;">$</div>
<div class="t" style="top:395.89px;font-size:10.7px;color:#1a1a1a;left:110.4px;width:60px;text-align:right;">6,168</div>
<div class="t" style="top:395.89px;font-size:10.7px;color:#1a1a1a;left:181.8px;">$</div>
<div class="t" style="top:395.89px;font-size:10.7px;color:#1a1a1a;left:172.0px;width:60px;text-align:right;">6,672</div>
<div class="t" style="top:395.89px;font-size:10.7px;color:#1a1a1a;left:243.4px;">$</div>
<div class="t" style="top:395.89px;font-size:10.7px;color:#1a1a1a;left:234.2px;width:60px;text-align:right;">6,732</div>
<div class="t" style="top:395.89px;font-size:10.7px;color:#1a1a1a;left:305.6px;">$</div>
<div class="t" style="top:395.89px;font-size:10.7px;color:#1a1a1a;left:296.09999999999997px;width:60px;text-align:right;">7,032</div>
<div class="t" style="top:395.89px;font-size:10.7px;color:#1a1a1a;left:367.5px;">$</div>
<div class="t" style="top:395.89px;font-size:10.7px;color:#1a1a1a;left:357.7px;width:60px;text-align:right;">6,504</div>
<div class="t" style="top:395.89px;font-size:10.7px;color:#1a1a1a;left:429.1px;">$</div>
<div class="t" style="top:395.89px;font-size:10.7px;color:#1a1a1a;left:422.9px;width:60px;text-align:right;">6,804</div>
<div class="t" style="top:395.89px;font-size:10.7px;color:#1a1a1a;left:494.3px;">$</div>
<div class="t" style="top:395.89px;font-size:10.7px;color:#1a1a1a;left:485.19999999999993px;width:60px;text-align:right;">39,912</div>
<div class="t" style="top:409.82px;font-size:10.7px;color:#1a1a1a;left:25.8px;">Other</div>
<div class="t" style="top:409.82px;font-size:10.7px;color:#1a1a1a;left:120.39999999999999px;">$</div>
<div class="t" style="top:409.82px;font-size:10.7px;color:#1a1a1a;left:110.4px;width:60px;text-align:right;">2,460</div>
<div class="t" style="top:409.82px;font-size:10.7px;color:#1a1a1a;left:181.8px;">$</div>
<div class="t" style="top:409.82px;font-size:10.7px;color:#1a1a1a;left:172.0px;width:60px;text-align:right;">2,724</div>
<div class="t" style="top:409.82px;font-size:10.7px;color:#1a1a1a;left:243.4px;">$</div>
<div class="t" style="top:409.82px;font-size:10.7px;color:#1a1a1a;left:234.2px;width:60px;text-align:right;">3,720</div>
<div class="t" style="top:409.82px;font-size:10.7px;color:#1a1a1a;left:305.6px;">$</div>
<div class="t" style="top:409.82px;font-size:10.7px;color:#1a1a1a;left:296.09999999999997px;width:60px;text-align:right;">2,304</div>
<div class="t" style="top:409.82px;font-size:10.7px;color:#1a1a1a;left:367.5px;">$</div>
<div class="t" style="top:409.82px;font-size:10.7px;color:#1a1a1a;left:357.7px;width:60px;text-align:right;">2,556</div>
<div class="t" style="top:409.82px;font-size:10.7px;color:#1a1a1a;left:429.1px;">$</div>
<div class="t" style="top:409.82px;font-size:10.7px;color:#1a1a1a;left:422.9px;width:60px;text-align:right;">2,568</div>
<div class="t" style="top:409.82px;font-size:10.7px;color:#1a1a1a;left:494.3px;">$</div>
<div class="t" style="top:409.82px;font-size:10.7px;color:#1a1a1a;left:485.19999999999993px;width:60px;text-align:right;">16,332</div>
<div class="t" style="top:423.75px;font-size:10.7px;color:#1a1a1a;font-weight:bold;left:25.8px;">Total</div>
<div class="t" style="top:423.75px;font-size:10.7px;color:#1a1a1a;font-weight:bold;left:120.39999999999999px;">$</div>
<div class="t" style="top:423.75px;font-size:10.7px;color:#1a1a1a;font-weight:bold;left:110.4px;width:60px;text-align:right;">43,104</div>
<div class="t" style="top:423.75px;font-size:10.7px;color:#1a1a1a;font-weight:bold;left:181.8px;">$</div>
<div class="t" style="top:423.75px;font-size:10.7px;color:#1a1a1a;font-weight:bold;left:172.0px;width:60px;text-align:right;">43,080</div>
<div class="t" style="top:423.75px;font-size:10.7px;color:#1a1a1a;font-weight:bold;left:243.4px;">$</div>
<div class="t" style="top:423.75px;font-size:10.7px;color:#1a1a1a;font-weight:bold;left:234.2px;width:60px;text-align:right;">42,588</div>
<div class="t" style="top:423.75px;font-size:10.7px;color:#1a1a1a;font-weight:bold;left:305.6px;">$</div>
<div class="t" style="top:423.75px;font-size:10.7px;color:#1a1a1a;font-weight:bold;left:296.09999999999997px;width:60px;text-align:right;">44,376</div>
<div class="t" style="top:423.75px;font-size:10.7px;color:#1a1a1a;font-weight:bold;left:367.5px;">$</div>
<div class="t" style="top:423.75px;font-size:10.7px;color:#1a1a1a;font-weight:bold;left:357.7px;width:60px;text-align:right;">44,256</div>
<div class="t" style="top:423.75px;font-size:10.7px;color:#1a1a1a;font-weight:bold;left:429.1px;">$</div>
<div class="t" style="top:423.75px;font-size:10.7px;color:#1a1a1a;font-weight:bold;left:422.9px;width:60px;text-align:right;">43,776</div>
<div class="t" style="top:423.75px;font-size:10.7px;color:#1a1a1a;font-weight:bold;left:494.3px;">$</div>
<div class="t" style="top:423.75px;font-size:10.7px;color:#1a1a1a;font-weight:bold;left:485.19999999999993px;width:60px;text-align:right;">261,180</div>
<svg class="a" style="left:0;top:0" width="768" height="491" viewBox="0 0 768 491">
<polyline points="560.80,326.87 578.76,331.12 596.72,335.54 614.68,329.82 632.64,326.24 650.60,330.66" fill="none" stroke="#55657a" stroke-width="1.0"/>
<circle cx="560.80" cy="326.87" r="1.1" fill="#a84a52"/>
<circle cx="578.76" cy="331.12" r="1.1" fill="#a84a52"/>
<circle cx="596.72" cy="335.54" r="1.1" fill="#a84a52"/>
<circle cx="614.68" cy="329.82" r="1.1" fill="#a84a52"/>
<circle cx="632.64" cy="326.24" r="1.1" fill="#a84a52"/>
<circle cx="650.60" cy="330.66" r="1.1" fill="#a84a52"/>
<polyline points="560.80,349.47 578.76,340.39 596.72,343.98 614.68,340.17 632.64,341.18 650.60,342.41" fill="none" stroke="#55657a" stroke-width="1.0"/>
<circle cx="560.80" cy="349.47" r="1.1" fill="#a84a52"/>
<circle cx="578.76" cy="340.39" r="1.1" fill="#a84a52"/>
<circle cx="596.72" cy="343.98" r="1.1" fill="#a84a52"/>
<circle cx="614.68" cy="340.17" r="1.1" fill="#a84a52"/>
<circle cx="632.64" cy="341.18" r="1.1" fill="#a84a52"/>
<circle cx="650.60" cy="342.41" r="1.1" fill="#a84a52"/>
<polyline points="560.80,359.49 578.76,361.54 596.72,355.96 614.68,354.10 632.64,354.29 650.60,363.40" fill="none" stroke="#55657a" stroke-width="1.0"/>
<circle cx="560.80" cy="359.49" r="1.1" fill="#a84a52"/>
<circle cx="578.76" cy="361.54" r="1.1" fill="#a84a52"/>
<circle cx="596.72" cy="355.96" r="1.1" fill="#a84a52"/>
<circle cx="614.68" cy="354.10" r="1.1" fill="#a84a52"/>
<circle cx="632.64" cy="354.29" r="1.1" fill="#a84a52"/>
<circle cx="650.60" cy="363.40" r="1.1" fill="#a84a52"/>
<polyline points="560.80,376.75 578.76,377.33 596.72,375.59 614.68,377.18 632.64,373.84 650.60,368.03" fill="none" stroke="#55657a" stroke-width="1.0"/>
<circle cx="560.80" cy="376.75" r="1.1" fill="#a84a52"/>
<circle cx="578.76" cy="377.33" r="1.1" fill="#a84a52"/>
<circle cx="596.72" cy="375.59" r="1.1" fill="#a84a52"/>
<circle cx="614.68" cy="377.18" r="1.1" fill="#a84a52"/>
<circle cx="632.64" cy="373.84" r="1.1" fill="#a84a52"/>
<circle cx="650.60" cy="368.03" r="1.1" fill="#a84a52"/>
<polyline points="560.80,382.84 578.76,386.23 596.72,389.95 614.68,381.96 632.64,391.26 650.60,384.80" fill="none" stroke="#55657a" stroke-width="1.0"/>
<circle cx="560.80" cy="382.84" r="1.1" fill="#a84a52"/>
<circle cx="578.76" cy="386.23" r="1.1" fill="#a84a52"/>
<circle cx="596.72" cy="389.95" r="1.1" fill="#a84a52"/>
<circle cx="614.68" cy="381.96" r="1.1" fill="#a84a52"/>
<circle cx="632.64" cy="391.26" r="1.1" fill="#a84a52"/>
<circle cx="650.60" cy="384.80" r="1.1" fill="#a84a52"/>
<polyline points="560.80,405.19 578.76,399.76 596.72,399.12 614.68,395.89 632.64,401.57 650.60,398.34" fill="none" stroke="#55657a" stroke-width="1.0"/>
<circle cx="560.80" cy="405.19" r="1.1" fill="#a84a52"/>
<circle cx="578.76" cy="399.76" r="1.1" fill="#a84a52"/>
<circle cx="596.72" cy="399.12" r="1.1" fill="#a84a52"/>
<circle cx="614.68" cy="395.89" r="1.1" fill="#a84a52"/>
<circle cx="632.64" cy="401.57" r="1.1" fill="#a84a52"/>
<circle cx="650.60" cy="398.34" r="1.1" fill="#a84a52"/>
<polyline points="560.80,418.10 578.76,416.36 596.72,409.82 614.68,419.12 632.64,417.46 650.60,417.39" fill="none" stroke="#55657a" stroke-width="1.0"/>
<circle cx="560.80" cy="418.10" r="1.1" fill="#a84a52"/>
<circle cx="578.76" cy="416.36" r="1.1" fill="#a84a52"/>
<circle cx="596.72" cy="409.82" r="1.1" fill="#a84a52"/>
<circle cx="614.68" cy="419.12" r="1.1" fill="#a84a52"/>
<circle cx="632.64" cy="417.46" r="1.1" fill="#a84a52"/>
<circle cx="650.60" cy="417.39" r="1.1" fill="#a84a52"/>
<polyline points="560.80,430.37 578.76,430.49 596.72,433.05 614.68,423.75 632.64,424.37 650.60,426.87" fill="none" stroke="#55657a" stroke-width="1.0"/>
<circle cx="560.80" cy="430.37" r="1.1" fill="#a84a52"/>
<circle cx="578.76" cy="430.49" r="1.1" fill="#a84a52"/>
<circle cx="596.72" cy="433.05" r="1.1" fill="#a84a52"/>
<circle cx="614.68" cy="423.75" r="1.1" fill="#a84a52"/>
<circle cx="632.64" cy="424.37" r="1.1" fill="#a84a52"/>
<circle cx="650.60" cy="426.87" r="1.1" fill="#a84a52"/>
</svg>
<svg class="a" style="left:655px;top:430.98px" width="5" height="5" viewBox="0 0 5 5"><path d="M5 0 V5 H0Z" fill="#4a7ebb"/></svg>
<div class="a" style="left:488.2px;top:323.74px;width:62.899999999999956px;height:14.53px;border:1.3px solid #6f9a80"></div>
<div class="a" style="left:485.4px;top:320.64000000000004px;width:6.6px;height:6.6px;border-radius:50%;background:#f4faf6;border:0.9px solid #7fa08c"></div>
<div class="a" style="left:547.6999999999999px;top:334.77000000000004px;width:6.6px;height:6.6px;border-radius:50%;background:#f4faf6;border:0.9px solid #7fa08c"></div>
<div class="a" style="left:757.7px;top:56px;width:10.3px;height:406.1px;background:#dcdcdc"></div>
<div class="a" style="left:757.7px;top:56px;width:1px;height:406.1px;background:#c6c6c6"></div>
<div class="a" style="left:759.4px;top:61.6px;width:6.6px;height:7.4px;background:#fff"></div>
<svg class="a" style="left:760.00px;top:63.50px" width="5.40" height="3.70"><path d="M1.00 2.70 L4.40 2.70 L2.70 1.00Z" fill="#444"/></svg>
<div class="a" style="left:759.3px;top:80px;width:7.6px;height:272px;background:#fff"></div>
<div class="a" style="left:758.8px;top:454.8px;width:8px;height:8px;background:#fff"></div>
<svg class="a" style="left:760.40px;top:457.00px" width="5.70" height="3.60"><path d="M1.00 1.00 L4.70 1.00 L2.85 2.60Z" fill="#444"/></svg>
<div class="a" style="left:0;top:462.1px;width:768px;height:11.899999999999977px;background:#d6d6d6"></div>
<svg class="a" style="left:10.00px;top:465.80px" width="3.60" height="4.80"><path d="M2.60 1.00 L2.60 3.80 L1.00 2.40Z" fill="#bdbdbd"/></svg>
<svg class="a" style="left:22.00px;top:465.80px" width="3.60" height="4.80"><path d="M1.00 1.00 L1.00 3.80 L2.60 2.40Z" fill="#bdbdbd"/></svg>
<div class="a" style="left:43.2px;top:463.5px;width:37.7px;height:9.9px;background:#9e5012"></div>
<div class="t" style="left:43.2px;width:37.7px;text-align:center;top:465.4px;font-size:6.9px;color:#fff;">Overview</div>
<div class="a" style="left:82.1px;top:463.5px;width:33.900000000000006px;height:9.9px;background:#eef3ea"></div>
<div class="t" style="left:82.1px;width:33.900000000000006px;text-align:center;top:465.4px;font-size:6.9px;color:#2e7a3f;font-weight:bold;">By Year</div>
<div class="a" style="left:116.6px;top:463.5px;width:41.70000000000002px;height:9.9px;background:#f8c497"></div>
<div class="t" style="left:116.6px;width:41.70000000000002px;text-align:center;top:465.4px;font-size:6.9px;color:#3a3a3a;">By Month</div>
<div class="a" style="left:158.7px;top:463.5px;width:36.5px;height:9.9px;background:#8062a6"></div>
<div class="t" style="left:158.7px;width:36.5px;text-align:center;top:465.4px;font-size:6.9px;color:#fff;">Products</div>
<div class="t" style="left:196.3px;width:43.19999999999999px;text-align:center;top:465.4px;font-size:6.9px;color:#333;">Customers</div>
<div class="a" style="left:240.6px;top:463.5px;width:35.00000000000003px;height:9.9px;background:#fbe6d6"></div>
<div class="t" style="left:240.6px;width:35.00000000000003px;text-align:center;top:465.4px;font-size:6.9px;color:#333;">Analysis</div>
<div class="t" style="left:277px;width:73px;text-align:center;top:465.4px;font-size:6.9px;color:#555;">Revenue by Country</div>
<div class="a" style="left:83px;top:472.5px;width:32px;height:1px;background:#217346"></div>
<div class="a" style="left:352px;top:464px;width:0.7px;height:8px;background:#b8b8b8"></div>
<svg class="a" style="left:365.2px;top:462.5px" width="11" height="11" viewBox="0 0 11 11"><circle cx="5.5" cy="5.5" r="4.8" fill="none" stroke="#5a5a5a" stroke-width="0.9"/><path d="M5.5 2.8 V8.2 M2.8 5.5 H8.2" stroke="#5a5a5a" stroke-width="0.9"/></svg>
<div class="a" style="left:503.5px;top:464px;width:0.7px;height:8px;background:#c0c0c0"></div>
<div class="a" style="left:510px;top:463.5px;width:7.3px;height:9px;background:#fff"></div>
<svg class="a" style="left:511.50px;top:465.50px" width="4.30" height="5.50"><path d="M3.30 1.00 L3.30 4.50 L1.00 2.75Z" fill="#333"/></svg>
<div class="a" style="left:533.7px;top:463.5px;width:153.5px;height:9px;background:#fff"></div>
<div class="a" style="left:750px;top:464px;width:8px;height:8px;background:#fff"></div>
<svg class="a" style="left:751.80px;top:465.50px" width="4.30" height="5.50"><path d="M1.00 1.00 L1.00 4.50 L3.30 2.75Z" fill="#333"/></svg>
<div class="a" style="left:0;top:474.0px;width:768px;height:17.0px;background:#f0f0f0"></div>
<div class="t" style="left:4.7px;top:481px;font-size:5.4px;color:#444">Ready</div>
<div class="a" style="left:614px;top:475.0px;width:19.5px;height:16.0px;background:#cdcdcd"></div>
<svg class="a" style="left:619px;top:479px" width="10" height="9" viewBox="0 0 10 9"><path d="M0.5 0.5 H9.5 V8.5 H0.5Z M0.5 3.2 H9.5 M0.5 5.8 H9.5 M3.5 0.5 V8.5 M6.5 0.5 V8.5" fill="none" stroke="#6a6a6a" stroke-width="0.7"/></svg>
<svg class="a" style="left:639px;top:479.6px" width="9" height="9" viewBox="0 0 9 9"><rect x="0.5" y="0.5" width="8" height="8" fill="none" stroke="#6a6a6a" stroke-width="0.7"/><rect x="2.2" y="1.8" width="4.6" height="5.4" fill="none" stroke="#6a6a6a" stroke-width="0.7"/></svg>
<svg class="a" style="left:659px;top:479.6px" width="9" height="9" viewBox="0 0 9 9"><path d="M0.5 0.5 H8.5 V8.5 H0.5Z M2.2 0.5 V5.6 H6.8 V0.5 M4.5 0.5 V5.6" fill="none" stroke="#6a6a6a" stroke-width="0.7"/></svg>
<div class="a" style="left:676px;top:483px;width:3px;height:0.8px;background:#666"></div>
<div class="a" style="left:681px;top:483.2px;width:54.5px;height:0.6px;background:#9a9a9a"></div>
<div class="a" style="left:711.3px;top:480.2px;width:2.2px;height:6px;background:#5a5a5a;border-radius:0.5px"></div>
<div class="a" style="left:736.5px;top:483px;width:4px;height:0.8px;background:#666"></div>
<div class="a" style="left:738.1px;top:481.4px;width:0.8px;height:4px;background:#666"></div>
<div class="t" style="left:749.2px;top:480.4px;font-size:5.4px;color:#555">154%</div>
</body></html>
